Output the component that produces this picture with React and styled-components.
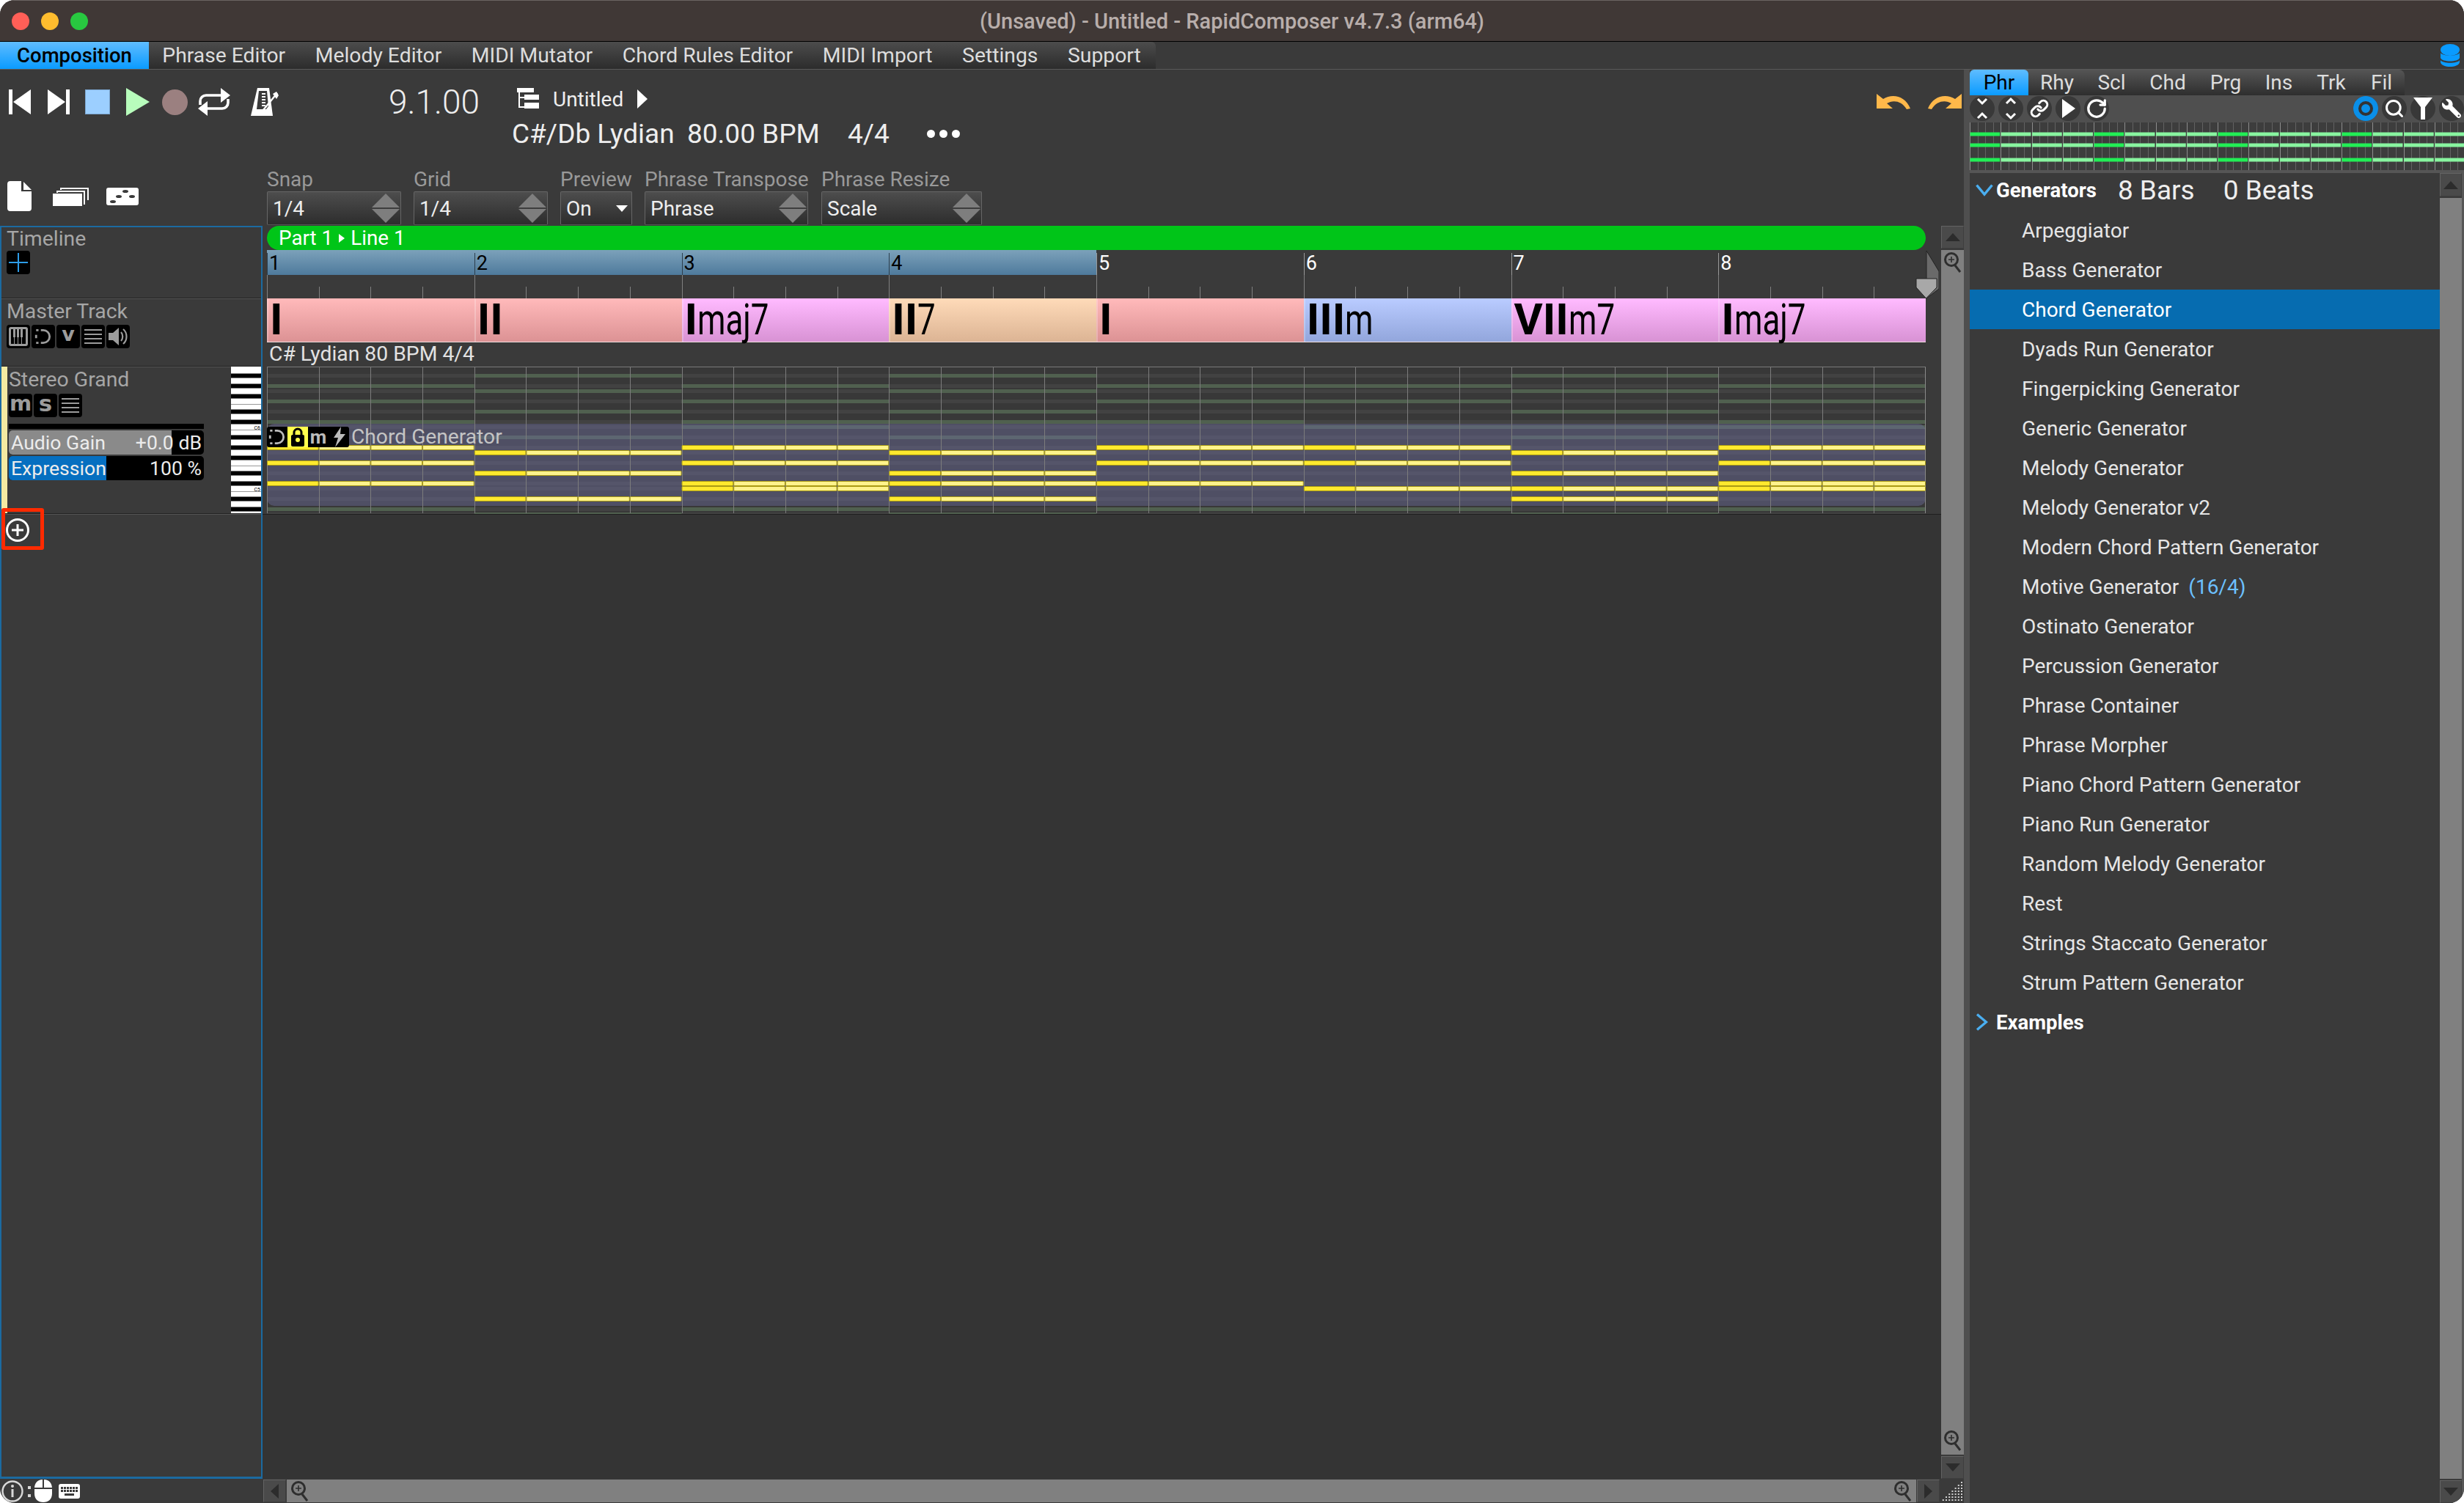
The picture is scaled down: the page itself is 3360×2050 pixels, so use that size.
import styled, { createGlobalStyle } from "styled-components";
import { Link, RotateCw, Search } from "lucide-react";
import { FaWrench } from "react-icons/fa";

const GlobalStyle = createGlobalStyle`
  html, body {
    margin: 0;
    padding: 0;
    background: #fff;
  }
`;

const Window = styled.div`
  width: 3360px;
  height: 2050px;
  border-radius: 20px;
  overflow: hidden;
  background: #3a3a3a;
  display: flex;
  flex-direction: column;
  font-family: Roboto, "Liberation Sans", sans-serif;
  color: #eee;
`;

const TitleBar = styled.div`
  height: 57px;
  flex: none;
  box-sizing: border-box;
  display: grid;
  grid-template-columns: 1fr auto 1fr;
  align-items: center;
  background: #403836;
  border-top: 1px solid #6a6462;
  border-bottom: 1px solid #000;
`;

const Lights = styled.div`
  display: flex;
  gap: 16px;
  padding-left: 16px;
`;

const Light = styled.span`
  width: 24px;
  height: 24px;
  border-radius: 50%;
  background: ${(p) => p.$color};
`;

const Title = styled.div`
  font-size: 29px;
  font-weight: 500;
  color: #b8aeab;
`;

const MenuRow = styled.div`
  height: 38px;
  flex: none;
  box-sizing: border-box;
  display: flex;
  border-bottom: 1px solid #5a5a5a;
  position: relative;
`;

const Menu = styled.div`
  display: flex;
  border-radius: 0 6px 0 0;
  background: linear-gradient(#4c4c4c, #2c2c2c);
`;

const MenuItem = styled.div`
  display: flex;
  align-items: center;
  justify-content: center;
  padding: 0 20.3px;
  font-size: 28.3px;
  color: #ddd;
`;

const ActiveMenuItem = styled(MenuItem)`
  width: 203px;
  box-sizing: border-box;
  padding: 0;
  margin-right: -2px;
  font-size: 27.5px;
  font-weight: 500;
  color: #000;
  background: linear-gradient(#5fbcff, #0a9bff);
`;

const DbIcon = styled.svg`
  width: 28px;
  height: 33px;
  margin: 3px 5px 0 auto;
`;

const Body = styled.div`
  flex: 1;
  display: flex;
  min-height: 0;
`;

const Main = styled.div`
  width: 2678px;
  flex: none;
  display: flex;
  flex-direction: column;
`;

const TopRow = styled.div`
  height: 137px;
  flex: none;
  display: flex;
  padding-top: 24px;
  box-sizing: border-box;
`;

const Transport = styled.div`
  width: 530px;
  height: 40px;
  flex: none;
  display: flex;
  align-items: center;
  padding-left: 12px;
  box-sizing: border-box;
`;

const TransportIcon = styled.svg`
  margin-left: ${(p) => p.$gap || 0}px;
  flex: none;
`;

const Position = styled.div`
  width: 168px;
  flex: none;
  height: 40px;
  line-height: 40px;
  font-size: 46px;
  font-weight: 300;
`;

const SongInfo = styled.div`
  display: flex;
  flex-direction: column;
  gap: 16px;
`;

const SongName = styled.div`
  display: flex;
  align-items: center;
  height: 32px;
  padding-left: 7px;
  font-size: 28px;
`;

const SongMeta = styled.div`
  display: flex;
  align-items: center;
  font-size: 37px;
  height: 30px;
`;

const MetaPart = styled.span`
  width: ${(p) => p.$w}px;
  flex: none;
`;

const Dots = styled.div`
  display: flex;
  gap: 6px;
`;

const Dot = styled.span`
  width: 11px;
  height: 11px;
  border-radius: 50%;
  background: #fff;
`;

const UndoRedo = styled.div`
  margin-left: auto;
  display: flex;
  gap: 24px;
  padding: 9px 3px 0 0;
`;

const ControlRow = styled.div`
  height: 76px;
  flex: none;
  display: flex;
`;

const DocIcons = styled.div`
  width: 364px;
  flex: none;
  display: flex;
  align-items: center;
  padding-left: 10px;
  box-sizing: border-box;
  height: 41px;
  margin-top: 15px;
`;

const Control = styled.div`
  width: ${(p) => p.$w}px;
  margin-right: ${(p) => p.$mr || 17}px;
  flex: none;
  display: flex;
  flex-direction: column;
`;

const ControlLabel = styled.div`
  height: 29px;
  line-height: 25px;
  font-size: 28px;
  color: #999;
  white-space: nowrap;
`;

const Combo = styled.div`
  height: 46px;
  box-sizing: border-box;
  display: flex;
  align-items: center;
  justify-content: space-between;
  border: 1px solid #666;
  border-bottom-color: #555;
  border-radius: 2px;
  padding: 0 1px 0 7px;
  background: linear-gradient(#4d4d4d, #2d2d2d);
  font-size: 28px;
  color: #eee;
`;

const Spinner = styled.div`
  display: flex;
  flex-direction: column;
  gap: 2px;
`;

const SpinUp = styled.span`
  width: 0;
  height: 0;
  border-left: 19px solid transparent;
  border-right: 19px solid transparent;
  border-bottom: 19px solid #7e7e7e;
`;

const SpinDown = styled(SpinUp)`
  border-bottom: 0;
  border-top: 19px solid #7e7e7e;
`;

const DropArrow = styled.span`
  width: 0;
  height: 0;
  margin-right: 4px;
  border-left: 8px solid transparent;
  border-right: 8px solid transparent;
  border-top: 9px solid #fff;
`;

const Workspace = styled.div`
  flex: 1;
  min-height: 0;
  display: flex;
`;

const TrackPanel = styled.div`
  width: 358px;
  flex: none;
  box-sizing: border-box;
  border: 2px solid #1b6aa0;
  border-bottom-width: 3px;
  display: flex;
  flex-direction: column;
`;

const TrackHead = styled.div`
  height: ${(p) => p.$h}px;
  flex: none;
  box-sizing: border-box;
  padding: ${(p) => p.$pad}px 0 0 7px;
  border-bottom: 1px solid #232323;
  box-shadow: 0 1px 0 #555;
`;

const TrackName = styled.div`
  font-size: 28.4px;
  line-height: 32px;
  color: #a6a6a6;
`;

const SmallButtons = styled.div`
  display: flex;
  gap: 2px;
  margin-top: ${(p) => p.$top || 0}px;
`;

const SmallButton = styled.div`
  width: 32px;
  height: 32px;
  border-radius: 4px;
  background: #000;
  color: #9c9c9c;
  display: flex;
  align-items: center;
  justify-content: center;
`;

const ButtonLetter = styled.span`
  font-family: "DejaVu Sans", sans-serif;
  font-weight: 700;
  font-size: ${(p) => p.$size}px;
  line-height: 32px;
  height: 32px;
  margin-top: -6px;
`;

const InstrumentRow = styled.div`
  height: 200px;
  flex: none;
  display: flex;
  border-bottom: 1px solid #232323;
  box-shadow: 0 1px 0 #555;
  box-sizing: content-box;
`;

const ColorStrip = styled.div`
  width: 8px;
  flex: none;
  background: #f4eaa2;
`;

const InstrumentInfo = styled.div`
  flex: 1;
  padding: 2px 0 0 2px;
`;

const Piano = styled.svg`
  width: 41px;
  height: 200px;
  flex: none;
  display: block;
`;

const MeterCap = styled.div`
  width: 266px;
  height: 7px;
  margin-top: 9px;
  background: #000;
`;

const Meter = styled.div`
  width: 266px;
  height: 33px;
  margin-top: ${(p) => p.$top}px;
  box-sizing: border-box;
  position: relative;
  border-radius: 5px;
  overflow: hidden;
  background: #000;
  display: flex;
  justify-content: space-between;
  align-items: center;
  padding: 0 3px;
  font-size: 26.6px;
  color: #ececec;
`;

const MeterFill = styled.div`
  position: absolute;
  left: 0;
  top: 0;
  bottom: 0;
  background: ${(p) => p.$color};
`;

const MeterText = styled.span`
  position: relative;
`;

const AddRow = styled.div`
  position: relative;
  flex: none;
  padding: 5px 0 0 5px;
`;

const AddHighlight = styled.div`
  position: absolute;
  left: 0;
  top: -8px;
  width: 58px;
  height: 57px;
  box-sizing: border-box;
  border: 5px solid #ff2a00;
  border-radius: 3px;
`;

const Arrange = styled.div`
  flex: 1;
  min-width: 0;
  position: relative;
  background: #343434;
`;

const ArrangeInner = styled.div`
  background: #3a3a3a;
  padding-left: 6px;
  border-bottom: 1px solid #1f1f1f;
`;

const ArrangeWidth = styled.div`
  width: 2262px;
`;

const PartBar = styled.div`
  height: 33px;
  border-radius: 17px;
  background: #00c518;
  color: #fff;
  display: flex;
  align-items: center;
  gap: 8px;
  padding-left: 16px;
  font-size: 27.8px;
`;

const PartArrow = styled.span`
  width: 0;
  height: 0;
  border-top: 6px solid transparent;
  border-bottom: 6px solid transparent;
  border-left: 8px solid #fff;
`;

const BarRow = styled.div`
  display: flex;
`;

const RulerBar = styled.div`
  flex: 1 1 0;
  height: 66px;
  display: flex;
  flex-direction: column;
  justify-content: space-between;
`;

const RulerHead = styled.div`
  height: 34px;
  box-sizing: border-box;
  padding: 3px 0 0 3px;
  font-size: 27px;
  line-height: 30px;
  color: ${(p) => (p.$loop ? "#000" : "#fff")};
  background: ${(p) => (p.$loop ? "linear-gradient(#7ca1ba, #4e7a9c)" : "none")};
  position: relative;

  &::before {
    content: "";
    position: absolute;
    left: 0;
    top: 4px;
    bottom: 0;
    width: 1px;
    background: ${(p) => (p.$loop ? "#2c3e4c" : "#999")};
  }
`;

const Ticks = styled.div`
  height: 32px;
  display: flex;
`;

const Tick = styled.div`
  flex: 1 1 0;
  border-left: 1px solid #808080;
  height: ${(p) => (p.$first ? 32 : 16)}px;
  align-self: flex-end;
`;

const ChordCell = styled.div`
  flex: 1 1 0;
  height: 60px;
  box-sizing: border-box;
  display: flex;
  align-items: center;
  padding: 0 0 2px 4px;
  background: linear-gradient(${(p) => p.$from}, ${(p) => p.$to});
  border-top: 1px solid ${(p) => p.$from};
  border-bottom: 1px solid #f2dfe0;
  box-shadow: inset 2px 0 0 rgba(255, 255, 255, 0.25);
  color: #000;
  font-size: 60px;
  line-height: 56px;
  white-space: nowrap;
`;

const Numeral = styled.span`
  font-weight: 700;
`;

const Suffix = styled.span`
  display: inline-block;
  transform: scaleX(0.73);
  transform-origin: left center;
`;

const KeyLine = styled.div`
  height: 33px;
  padding-left: 3px;
  font-size: 28.3px;
  line-height: 32px;
  color: #e2e2e2;
`;

const RollWrap = styled.div`
  position: relative;
  height: 201px;
`;

const PhraseHead = styled.div`
  position: absolute;
  left: 0;
  top: 79px;
  display: flex;
  align-items: center;
  color: #c4c4c4;
  font-size: 28.2px;
`;

const PhraseTools = styled.div`
  display: flex;
  background: #000;
  border-radius: 3px;
  height: 28px;
  margin-right: 3px;
`;

const PhraseTool = styled.div`
  width: 28px;
  height: 28px;
  display: flex;
  align-items: center;
  justify-content: center;
  background: ${(p) => (p.$on ? "#ffff4d" : "none")};
  color: #bbb;
  font-weight: 700;
  font-size: 26px;
`;

const EndMarker = styled.svg`
  position: absolute;
  left: 2254px;
  top: 34px;
`;

const VScroll = styled.div`
  width: 31px;
  flex: none;
  display: flex;
  flex-direction: column;
  gap: 2px;
`;

const ScrollButton = styled.div`
  flex: none;
  width: ${(p) => p.$w || 31}px;
  height: ${(p) => p.$h || 31}px;
  box-sizing: border-box;
  background: #4a4a4a;
  border: 1px solid #636363;
  border-right-color: #3e3e3e;
  border-bottom-color: #3e3e3e;
  display: flex;
  align-items: center;
  justify-content: center;
`;

const Triangle = styled.span`
  width: 0;
  height: 0;
  ${(p) =>
    p.$dir === "up" &&
    "border-left: 10px solid transparent; border-right: 10px solid transparent; border-bottom: 11px solid #2c2c2c;"}
  ${(p) =>
    p.$dir === "down" &&
    "border-left: 10px solid transparent; border-right: 10px solid transparent; border-top: 11px solid #2c2c2c;"}
  ${(p) =>
    p.$dir === "left" &&
    "border-top: 10px solid transparent; border-bottom: 10px solid transparent; border-right: 11px solid #2c2c2c;"}
  ${(p) =>
    p.$dir === "right" &&
    "border-top: 10px solid transparent; border-bottom: 10px solid transparent; border-left: 11px solid #2c2c2c;"}
`;

const VTrack = styled.div`
  flex: 1;
  background: #808080;
  display: flex;
  flex-direction: column;
  justify-content: space-between;
  align-items: center;
  padding: 2px 0 4px;
`;

const BottomRow = styled.div`
  height: 33px;
  flex: none;
  display: flex;
`;

const InfoBar = styled.div`
  width: 358px;
  flex: none;
  display: flex;
  align-items: center;
  padding-left: 2px;
  box-sizing: border-box;
`;

const HScroll = styled.div`
  flex: 1;
  display: flex;
  gap: 1px;
  padding: 1px 0 1px 1px;
`;

const HTrack = styled.div`
  flex: 1;
  background: #808080;
  display: flex;
  justify-content: space-between;
  align-items: center;
  padding: 0 5px;
`;

const Grip = styled.svg`
  width: 33px;
  height: 33px;
  flex: none;
`;

const Divider = styled.div`
  width: 8px;
  flex: none;
  background: #4f4f4f;
`;

const Side = styled.div`
  flex: 1;
  min-width: 0;
  display: flex;
  flex-direction: column;
`;

const TabStrip = styled.div`
  display: flex;
  height: 35px;
  flex: none;
`;

const Tabs = styled.div`
  display: flex;
  border-radius: 8px 8px 0 0;
  background: linear-gradient(#555, #2e2e2e);
`;

const Tab = styled.div`
  width: ${(p) => p.$w}px;
  box-sizing: border-box;
  display: flex;
  align-items: center;
  justify-content: center;
  border-radius: ${(p) => (p.$active ? "6px 6px 0 0" : 0)};
  background: ${(p) => (p.$active ? "linear-gradient(#5fbcff, #0a9bff)" : "none")};
  color: ${(p) => (p.$active ? "#000" : "#ddd")};
  font-size: 28px;
`;

const Toolbar = styled.div`
  height: 37px;
  flex: none;
  display: flex;
  justify-content: space-between;
  background: #4f4f4f;
  padding: 1px 0 2px;
  box-sizing: border-box;
`;

const ToolGroup = styled.div`
  display: flex;
  gap: 5px;
`;

const RoundTool = styled.div`
  width: 34px;
  height: 34px;
  border-radius: 50%;
  background: #383838;
  color: #fff;
  display: flex;
  align-items: center;
  justify-content: center;
  flex: none;
`;

const Preview = styled.svg`
  display: block;
  flex: none;
  width: 674px;
  height: 65px;
`;

const ListArea = styled.div`
  flex: 1;
  min-height: 0;
  display: flex;
  border-top: 4px solid #565656;
  border-right: 3px solid #565656;
`;

const List = styled.div`
  flex: 1;
  min-width: 0;
`;

const GroupRow = styled.div`
  height: ${(p) => p.$h}px;
  box-sizing: border-box;
  display: flex;
  align-items: center;
  padding: 0 0 ${(p) => p.$under || 0}px 8px;
`;

const GroupName = styled.span`
  font-size: 27.5px;
  font-weight: 700;
  color: #fff;
  margin-left: 4px;
`;

const Duration = styled.span`
  font-size: 37px;
  margin-left: ${(p) => p.$gap}px;
`;

const ListItem = styled.div`
  height: 54px;
  display: flex;
  align-items: center;
  padding-left: 71px;
  font-size: 28px;
  color: ${(p) => (p.$active ? "#fff" : "#e6e6e6")};
  background: ${(p) => (p.$active ? "#066cb0" : "none")};
`;

const Hint = styled.span`
  color: #6cc0ff;
  margin-left: 13px;
`;

const SideScroll = styled.div`
  width: 30px;
  flex: none;
  display: flex;
  flex-direction: column;
  gap: 2px;
`;

const SideTrack = styled.div`
  flex: 1;
  background: #808080;
`;

const BARS = [
  { num: "I", suf: "", from: "#ffb9ba", to: "#dc9294", pcs: [0, 4, 7], notes: [15, 18, 22] },
  { num: "II", suf: "", from: "#ffb9ba", to: "#dc9294", pcs: [2, 6, 9], notes: [16, 20, 25] },
  { num: "I", suf: "maj7", from: "#ffbaff", to: "#d892d4", pcs: [0, 4, 7, 11], notes: [15, 18, 22, 23] },
  { num: "II", suf: "7", from: "#fedab8", to: "#dcb494", pcs: [2, 6, 9, 0], notes: [16, 20, 22, 25] },
  { num: "I", suf: "", from: "#ffb9ba", to: "#dc9294", pcs: [0, 4, 7], notes: [15, 18, 22] },
  { num: "III", suf: "m", from: "#b9cbff", to: "#92a6dc", pcs: [4, 7, 11], notes: [15, 18, 23] },
  { num: "VII", suf: "m7", from: "#ffbaff", to: "#d892d4", pcs: [11, 2, 6, 9], notes: [16, 20, 23, 25] },
  { num: "I", suf: "maj7", from: "#ffbaff", to: "#d892d4", pcs: [0, 4, 7, 11], notes: [15, 18, 22, 23] },
];

const BAR_W = 2262 / 8;
const BEAT_W = BAR_W / 4;
const ROWS = Array.from({ length: 29 }, (_, r) => r);
const pitchOf = (r) => ((22 - r) % 12 + 12) % 12;
const LYDIAN = [0, 2, 4, 6, 7, 9, 11];
const BLACK = [0, 2, 5, 7, 9];

const MENU = ["Phrase Editor", "Melody Editor", "MIDI Mutator", "Chord Rules Editor", "MIDI Import", "Settings", "Support"];
const TABS = [
  ["Phr", 80], ["Rhy", 78], ["Scl", 71], ["Chd", 82], ["Prg", 76], ["Ins", 69], ["Trk", 74], ["Fil", 63],
];
const GENERATORS = [
  "Arpeggiator", "Bass Generator", "Chord Generator", "Dyads Run Generator", "Fingerpicking Generator",
  "Generic Generator", "Melody Generator", "Melody Generator v2", "Modern Chord Pattern Generator",
  "Motive Generator", "Ostinato Generator", "Percussion Generator", "Phrase Container", "Phrase Morpher",
  "Piano Chord Pattern Generator", "Piano Run Generator", "Random Melody Generator", "Rest",
  "Strings Staccato Generator", "Strum Pattern Generator",
];

function LoopGlyph({ size = 26 }) {
  return (
    <svg width={size} height={size} viewBox="0 0 24 24" fill="none" stroke="currentColor" strokeWidth="2.6">
      <path d="M9 4h3a8 8 0 0 1 0 16H9" />
      <path d="M3 4h3M3 20h3M3 10v4" />
    </svg>
  );
}

function LinesGlyph() {
  return (
    <svg width="24" height="22" viewBox="0 0 24 22" fill="#9c9c9c">
      <rect y="1" width="24" height="2" />
      <rect y="7" width="24" height="2" />
      <rect y="13" width="24" height="2" />
      <rect y="19" width="24" height="2" />
    </svg>
  );
}

function Magnifier() {
  return (
    <svg width="26" height="30" viewBox="0 0 26 30" fill="none" stroke="#2e2e2e" strokeWidth="3">
      <circle cx="11" cy="11" r="8.5" />
      <path d="M16 19l7 9" />
      <path d="M7 11h8M11 7v8" strokeWidth="1.6" />
    </svg>
  );
}

function Chevrons({ inward }) {
  const top = inward ? "M6 3l6 6 6-6" : "M6 9l6-6 6 6";
  const bottom = inward ? "M6 29l6-6 6 6" : "M6 23l6 6 6-6";
  return (
    <svg width="24" height="32" viewBox="0 0 24 32" fill="none" stroke="#fff" strokeWidth="3">
      <path d={top} />
      <path d={bottom} />
    </svg>
  );
}

function PianoRoll() {
  return (
    <svg width="2262" height="201" viewBox="0 0 2262 201" style={{ display: "block" }}>
      <rect width="2262" height="200" fill="#383838" />
      {ROWS.filter((r) => LYDIAN.includes(pitchOf(r))).map((r) => (
        <rect key={r} x="0" y={3 + 7 * r} width="2262" height="5" fill="#424242" />
      ))}
      {BARS.map((bar, i) =>
        ROWS.filter((r) => bar.pcs.includes(pitchOf(r))).map((r) => (
          <rect key={`${i}-${r}`} x={i * BAR_W} y={3 + 7 * r} width={BAR_W} height="5" fill="#50604f" />
        ))
      )}
      <rect x="0" y="78" width="2262" height="112" rx="10" fill="#7171a3" fillOpacity="0.42" />
      {BARS.flatMap((_, i) =>
        [0, 1, 2, 3].map((b) => (
          <rect
            key={`${i}-${b}`}
            x={Math.round(i * BAR_W + b * BEAT_W)}
            y="0"
            width="1"
            height="200"
            fill="#7c7c7c"
          />
        ))
      )}
      <rect x="2261" y="0" width="1" height="200" fill="#8a8a8a" />
      <rect width="2262" height="1" fill="#7a7a7a" />
      {BARS.flatMap((bar, i) =>
        bar.notes.flatMap((r) =>
          [0, 1, 2, 3].map((b) => (
            <rect
              key={`${i}-${r}-${b}`}
              x={i * BAR_W + b * BEAT_W + 0.5}
              y={2.5 + 7 * r}
              width={BEAT_W - 1}
              height="6"
              rx="1"
              fill={b === 0 ? "#ffe92e" : "#fff38c"}
              stroke="#a89a14"
              strokeWidth="1"
            />
          ))
        )
      )}
    </svg>
  );
}

function PreviewNotes() {
  const beats = Array.from({ length: 16 }, (_, i) => i);
  const subs = Array.from({ length: 65 }, (_, i) => i);
  const step = 42.25;
  return (
    <Preview viewBox="0 0 674 65">
      <rect width="674" height="65" fill="#3d3d3d" />
      {subs.map((i) => (
        <rect key={i} x={Math.round((i * step) / 4)} width="1" height="65" fill={i % 4 === 0 ? "#8c8c8c" : "#626262"} />
      ))}
      {[16, 31, 51].flatMap((y) =>
        beats.map((b) => (
          <rect
            key={`${y}-${b}`}
            x={b * step + 0.5}
            y={y - 2.5}
            width={step - 1.5}
            height="5"
            fill={b % 4 === 0 ? "#22ee55" : "#88f5a0"}
          />
        ))
      )}
    </Preview>
  );
}

function PianoKeys() {
  return (
    <Piano viewBox="0 0 41 200">
      <rect width="41" height="200" fill="#fff" />
      {ROWS.filter((r) => BLACK.includes(pitchOf(r))).map((r) => (
        <rect key={r} y={2.5 + 7 * r} width="41" height="6" fill="#000" />
      ))}
      <rect y="51" width="41" height="1" fill="#999" />
      <rect y="86" width="41" height="1" fill="#999" />
      <rect y="135" width="41" height="1" fill="#999" />
      <rect y="170" width="41" height="1" fill="#999" />
      <text x="40" y="86" textAnchor="end" fontSize="7" fontFamily="Roboto, sans-serif" fill="#000">C6</text>
      <text x="40" y="170" textAnchor="end" fontSize="7" fontFamily="Roboto, sans-serif" fill="#000">C5</text>
    </Piano>
  );
}

function App() {
  return (
    <>
      <GlobalStyle />
      <Window>
        <TitleBar>
          <Lights>
            <Light $color="#ff5f57" />
            <Light $color="#febc2e" />
            <Light $color="#28c840" />
          </Lights>
          <Title>(Unsaved) - Untitled - RapidComposer v4.7.3 (arm64)</Title>
          <span />
        </TitleBar>

        <MenuRow>
          <Menu>
            <ActiveMenuItem>Composition</ActiveMenuItem>
            {MENU.map((item) => (
              <MenuItem key={item}>{item}</MenuItem>
            ))}
          </Menu>
          <DbIcon viewBox="0 0 28 33" fill="#0a9bff">
            <ellipse cx="14" cy="8" rx="13" ry="8" />
            <path d="M1 12c3 5 23 5 26 0v7c-2 6-24 6-26 0z" />
            <path d="M1 22c3 5 23 5 26 0v3c-2 8-24 8-26 0z" />
          </DbIcon>
        </MenuRow>

        <Body>
          <Main>
            <TopRow>
              <Transport>
                <TransportIcon width="30" height="34" viewBox="0 0 30 34" fill="#fff">
                  <rect width="5" height="34" />
                  <path d="M30 0v34L6 17z" />
                </TransportIcon>
                <TransportIcon $gap={23} width="30" height="34" viewBox="0 0 30 34" fill="#fff">
                  <rect x="25" width="5" height="34" />
                  <path d="M0 0v34l24-17z" />
                </TransportIcon>
                <TransportIcon $gap={21} width="34" height="34" viewBox="0 0 34 34">
                  <rect x="0.5" y="0.5" width="33" height="33" fill="#9ccfff" stroke="#7ba5cf" />
                </TransportIcon>
                <TransportIcon $gap={22} width="32" height="38" viewBox="0 0 32 38" fill="#b8fdbc">
                  <path d="M0 0l32 19L0 38z" />
                </TransportIcon>
                <TransportIcon $gap={17} width="35" height="35" viewBox="0 0 35 35" fill="#9b8080">
                  <circle cx="17.5" cy="17.5" r="17.5" />
                </TransportIcon>
                <TransportIcon $gap={14} width="44" height="38" viewBox="0 0 44 38" fill="none" stroke="#fff" strokeWidth="3.6">
                  <path d="M3 23v-5a8 8 0 0 1 8-8h22" />
                  <path d="M41 15v5a8 8 0 0 1-8 8H11" />
                  <path d="M31 0l13 10-13 10z" fill="#fff" stroke="none" />
                  <path d="M13 18L0 28l13 10z" fill="#fff" stroke="none" />
                </TransportIcon>
                <TransportIcon $gap={28} width="40" height="38" viewBox="0 0 40 38">
                  <path d="M9 0h16l5 38H0z" fill="#fff" />
                  <path d="M11 4h11l2 21-3 4H8z" fill="#3a3a3a" />
                  <path d="M15 8h5M15 12h5M15 16h5M15 20h5M15 24h5" stroke="#fff" strokeWidth="2" />
                  <path d="M36 7L17 30" stroke="#fff" strokeWidth="2.4" />
                  <path d="M30 8l5 7 3-5-3-5z" fill="#fff" />
                </TransportIcon>
              </Transport>
              <Position>9.1.00</Position>
              <SongInfo>
                <SongName>
                  <svg width="30" height="30" viewBox="0 0 30 30" fill="#fff" style={{ marginRight: 19 }}>
                    <rect x="0" y="0" width="23" height="6" />
                    <rect x="10" y="9" width="20" height="7" />
                    <rect x="10" y="20" width="20" height="8" />
                    <path d="M3 6v20h8M3 13h8" fill="none" stroke="#fff" strokeWidth="2" />
                  </svg>
                  Untitled
                  <svg width="14" height="26" viewBox="0 0 14 26" fill="#fff" style={{ marginLeft: 19 }}>
                    <path d="M0 0l14 13L0 26z" />
                  </svg>
                </SongName>
                <SongMeta>
                  <MetaPart $w={239}>C#/Db Lydian</MetaPart>
                  <MetaPart $w={219}>80.00 BPM</MetaPart>
                  <MetaPart $w={108}>4/4</MetaPart>
                  <Dots>
                    <Dot />
                    <Dot />
                    <Dot />
                  </Dots>
                </SongMeta>
              </SongInfo>
              <UndoRedo>
                <svg width="46" height="22" viewBox="0 0 46 22" fill="#ffb84a">
                  <path d="M0 0v20h22L14 13c8-5 20-4 27 8l5-1C39 3 22-1 9 7z" />
                </svg>
                <svg width="46" height="22" viewBox="0 0 46 22" fill="#ffb84a">
                  <path d="M46 0v20H24L32 13C24 8 12 9 5 21L0 20C7 3 24-1 37 7z" />
                </svg>
              </UndoRedo>
            </TopRow>

            <ControlRow>
              <DocIcons>
                <svg width="33" height="41" viewBox="0 0 33 41" fill="#fff">
                  <path d="M4 0h15v14h14v23a4 4 0 0 1-4 4H4a4 4 0 0 1-4-4V4a4 4 0 0 1 4-4z" />
                  <path d="M22 1l11 11H22z" />
                </svg>
                <svg width="49" height="26" viewBox="0 0 49 26" fill="#fff" style={{ marginLeft: 29 }}>
                  <rect x="0" y="9" width="40" height="17" />
                  <path d="M5 8V5h39v19h-2V7H7v1zM10 4V1h39v17h-2V3H12v1z" />
                </svg>
                <svg width="44" height="24" viewBox="0 0 44 24" style={{ marginLeft: 24 }}>
                  <rect width="44" height="24" rx="3" fill="#fff" />
                  <g fill="#3a3a3a">
                    <ellipse cx="26" cy="5" rx="4" ry="2" />
                    <ellipse cx="17" cy="12" rx="4" ry="2" />
                    <ellipse cx="35" cy="12" rx="4" ry="2" />
                    <ellipse cx="9" cy="19" rx="4" ry="2" />
                  </g>
                </svg>
              </DocIcons>
              <Control $w={183}>
                <ControlLabel>Snap</ControlLabel>
                <Combo>1/4<Spinner><SpinUp /><SpinDown /></Spinner></Combo>
              </Control>
              <Control $w={183}>
                <ControlLabel>Grid</ControlLabel>
                <Combo>1/4<Spinner><SpinUp /><SpinDown /></Spinner></Combo>
              </Control>
              <Control $w={98}>
                <ControlLabel>Preview</ControlLabel>
                <Combo>On<DropArrow /></Combo>
              </Control>
              <Control $w={223} $mr={18}>
                <ControlLabel>Phrase Transpose</ControlLabel>
                <Combo>Phrase<Spinner><SpinUp /><SpinDown /></Spinner></Combo>
              </Control>
              <Control $w={219}>
                <ControlLabel>Phrase Resize</ControlLabel>
                <Combo>Scale<Spinner><SpinUp /><SpinDown /></Spinner></Combo>
              </Control>
            </ControlRow>

            <Workspace>
              <TrackPanel>
                <TrackHead $h={97} $pad={0}>
                  <TrackName>Timeline</TrackName>
                  <SmallButtons>
                    <SmallButton>
                      <svg width="26" height="28" viewBox="0 0 26 28" stroke="#2d9ce8" strokeWidth="2">
                        <path d="M0 14h26M13 1v26" />
                      </svg>
                    </SmallButton>
                  </SmallButtons>
                </TrackHead>
                <TrackHead $h={93} $pad={2}>
                  <TrackName>Master Track</TrackName>
                  <SmallButtons $top={2}>
                    <SmallButton>
                      <svg width="26" height="26" viewBox="0 0 26 26" fill="#9c9c9c">
                        <path fillRule="evenodd" d="M0 3a3 3 0 0 1 3-3h20a3 3 0 0 1 3 3v20a3 3 0 0 1-3 3H3a3 3 0 0 1-3-3zM3 3v20h4V14H6V3zM9 3v11H8v9h4V14h-1V3zM14 3v11h-1v9h4V14h-1V3zM19 3v11h-1v9h5V3z" />
                      </svg>
                    </SmallButton>
                    <SmallButton><LoopGlyph /></SmallButton>
                    <SmallButton><ButtonLetter $size={27}>v</ButtonLetter></SmallButton>
                    <SmallButton><LinesGlyph /></SmallButton>
                    <SmallButton>
                      <svg width="26" height="26" viewBox="0 0 26 26" fill="#9c9c9c">
                        <path d="M0 8h6l8-7v24l-8-7H0z" />
                        <path d="M17 7c3 3 3 9 0 12M20 3c6 5 6 15 0 20" fill="none" stroke="#9c9c9c" strokeWidth="2.2" />
                      </svg>
                    </SmallButton>
                  </SmallButtons>
                </TrackHead>
                <InstrumentRow>
                  <ColorStrip />
                  <InstrumentInfo>
                    <TrackName>Stereo Grand</TrackName>
                    <SmallButtons $top={3}>
                      <SmallButton><ButtonLetter $size={29}>m</ButtonLetter></SmallButton>
                      <SmallButton><ButtonLetter $size={31}>s</ButtonLetter></SmallButton>
                      <SmallButton><LinesGlyph /></SmallButton>
                    </SmallButtons>
                    <MeterCap />
                    <Meter $top={2}>
                      <MeterFill $color="#8a8a8a" style={{ width: "83.5%" }} />
                      <MeterText>Audio Gain</MeterText>
                      <MeterText>+0.0 dB</MeterText>
                    </Meter>
                    <Meter $top={2}>
                      <MeterFill $color="#066fc0" style={{ width: "50%" }} />
                      <MeterText>Expression</MeterText>
                      <MeterText>100 %</MeterText>
                    </Meter>
                  </InstrumentInfo>
                  <PianoKeys />
                </InstrumentRow>
                <AddRow>
                  <AddHighlight />
                  <svg width="34" height="34" viewBox="0 0 34 34" fill="none" stroke="#fff" style={{ display: "block" }}>
                    <circle cx="17" cy="17" r="14.5" strokeWidth="3" />
                    <path d="M17 9v16M9 17h16" strokeWidth="3" />
                  </svg>
                </AddRow>
              </TrackPanel>

              <Arrange>
                <ArrangeInner>
                  <ArrangeWidth>
                    <PartBar>
                      Part 1
                      <PartArrow />
                      Line 1
                    </PartBar>
                    <BarRow>
                      {BARS.map((_, i) => (
                        <RulerBar key={i}>
                          <RulerHead $loop={i < 4}>{i + 1}</RulerHead>
                          <Ticks>
                            <Tick $first />
                            <Tick />
                            <Tick />
                            <Tick />
                          </Ticks>
                        </RulerBar>
                      ))}
                    </BarRow>
                    <BarRow>
                      {BARS.map((bar, i) => (
                        <ChordCell key={i} $from={bar.from} $to={bar.to}>
                          <Numeral>{bar.num}</Numeral>
                          {bar.suf && <Suffix>{bar.suf}</Suffix>}
                        </ChordCell>
                      ))}
                    </BarRow>
                    <KeyLine>C# Lydian 80 BPM 4/4</KeyLine>
                    <RollWrap>
                      <PianoRoll />
                      <PhraseHead>
                        <PhraseTools>
                          <PhraseTool><LoopGlyph /></PhraseTool>
                          <PhraseTool $on>
                            <svg width="20" height="26" viewBox="0 0 20 26">
                              <path d="M5 11V7a5 5 0 0 1 10 0v4" fill="none" stroke="#000" strokeWidth="3" />
                              <rect x="1" y="10" width="18" height="16" rx="2" fill="#000" />
                              <circle cx="10" cy="17" r="3" fill="#ffff4d" />
                            </svg>
                          </PhraseTool>
                          <PhraseTool>m</PhraseTool>
                          <PhraseTool>
                            <svg width="20" height="28" viewBox="0 0 20 28" fill="#bbb">
                              <path d="M13 0L3 15h6L5 28l14-18h-7z" />
                            </svg>
                          </PhraseTool>
                        </PhraseTools>
                        Chord Generator
                      </PhraseHead>
                    </RollWrap>
                  </ArrangeWidth>
                </ArrangeInner>
                <EndMarker width="32" height="66" viewBox="0 0 32 66">
                  <path d="M15 0l17 28v24L15 65z" fill="#6a6a6a" stroke="#222" />
                  <path d="M1 38h28v12L14.5 65 1 50z" fill="#a8a8a8" stroke="#222" />
                </EndMarker>
              </Arrange>

              <VScroll>
                <ScrollButton><Triangle $dir="up" /></ScrollButton>
                <VTrack>
                  <Magnifier />
                  <Magnifier />
                </VTrack>
                <ScrollButton><Triangle $dir="down" /></ScrollButton>
              </VScroll>
            </Workspace>

            <BottomRow>
              <InfoBar>
                <svg width="30" height="30" viewBox="0 0 30 30">
                  <circle cx="15" cy="15" r="13.5" fill="none" stroke="#d8d8d8" strokeWidth="2.4" />
                  <circle cx="15" cy="8" r="2" fill="#d8d8d8" />
                  <rect x="13.5" y="12" width="3" height="11" fill="#d8d8d8" />
                </svg>
                <svg width="10" height="22" viewBox="0 0 10 22" fill="#d8d8d8" style={{ marginLeft: 4 }}>
                  <rect x="2" y="4" width="4" height="4" />
                  <rect x="2" y="15" width="4" height="4" />
                </svg>
                <svg width="24" height="31" viewBox="0 0 24 31" fill="#fff" style={{ marginLeft: 1 }}>
                  <path d="M0 12C0 5 4 0 11 0v11H0zM13 0c7 0 11 5 11 12v-1H13zM0 13h24v6c0 8-5 12-12 12S0 27 0 19z" />
                </svg>
                <svg width="29" height="20" viewBox="0 0 29 20" style={{ marginLeft: 9 }}>
                  <rect width="29" height="20" rx="3" fill="#fff" />
                  <g fill="#3a3a3a">
                    {[3, 7, 11, 15, 19, 23].map((x) => (
                      <rect key={x} x={x} y="4" width="3" height="3" />
                    ))}
                    {[3, 7, 11, 15, 19, 23].map((x) => (
                      <rect key={x} x={x} y="8" width="3" height="3" />
                    ))}
                    <rect x="8" y="13" width="13" height="3" />
                  </g>
                </svg>
              </InfoBar>
              <HScroll>
                <ScrollButton><Triangle $dir="left" /></ScrollButton>
                <HTrack>
                  <Magnifier />
                  <Magnifier />
                </HTrack>
                <ScrollButton><Triangle $dir="right" /></ScrollButton>
              </HScroll>
              <Grip viewBox="0 0 33 33" fill="#cfcfcf">
                {[0, 1, 2, 3, 4, 5, 6].flatMap((row) =>
                  Array.from({ length: row + 1 }, (_, k) => (
                    <rect key={`${row}-${k}`} x={29 - k * 4.2} y={4 + row * 4} width="2" height="2" />
                  ))
                )}
              </Grip>
            </BottomRow>
          </Main>

          <Divider />

          <Side>
            <TabStrip>
              <Tabs>
                {TABS.map(([label, width], i) => (
                  <Tab key={label} $w={width} $active={i === 0}>{label}</Tab>
                ))}
              </Tabs>
            </TabStrip>
            <Toolbar>
              <ToolGroup>
                <RoundTool><Chevrons inward /></RoundTool>
                <RoundTool><Chevrons /></RoundTool>
                <RoundTool><Link size={26} strokeWidth={2.8} /></RoundTool>
                <RoundTool>
                  <svg width="20" height="26" viewBox="0 0 20 26" fill="#fff"><path d="M2 0l18 13L2 26z" /></svg>
                </RoundTool>
                <RoundTool><RotateCw size={30} strokeWidth={2.6} /></RoundTool>
              </ToolGroup>
              <ToolGroup>
                <RoundTool>
                  <svg width="34" height="34" viewBox="0 0 34 34">
                    <circle cx="17" cy="17" r="17" fill="#0a8fe8" />
                    <circle cx="17" cy="17" r="8" fill="none" stroke="#333" strokeWidth="4" />
                  </svg>
                </RoundTool>
                <RoundTool><Search size={28} strokeWidth={2.6} /></RoundTool>
                <RoundTool>
                  <svg width="26" height="30" viewBox="0 0 26 30" fill="#fff"><path d="M0 0h26L16 13v17h-6V13z" /></svg>
                </RoundTool>
                <RoundTool><FaWrench size={26} style={{ transform: "scaleX(-1)" }} /></RoundTool>
              </ToolGroup>
            </Toolbar>
            <PreviewNotes />
            <ListArea>
              <List>
                <GroupRow $h={51} $under={5}>
                  <svg width="24" height="17" viewBox="0 0 24 17" fill="none" stroke="#4aaef0" strokeWidth="3.4">
                    <path d="M1.5 1.5L12 14 22.5 1.5" />
                  </svg>
                  <GroupName>Generators</GroupName>
                  <Duration $gap={29}>8 Bars</Duration>
                  <Duration $gap={39}>0 Beats</Duration>
                </GroupRow>
                {GENERATORS.map((name) => (
                  <ListItem key={name} $active={name === "Chord Generator"}>
                    {name}
                    {name === "Motive Generator" && <Hint>(16/4)</Hint>}
                  </ListItem>
                ))}
                <GroupRow $h={54}>
                  <svg width="17" height="24" viewBox="0 0 17 24" fill="none" stroke="#4aaef0" strokeWidth="3.4" style={{ marginRight: 7 }}>
                    <path d="M2 1.5L14.5 12 2 22.5" />
                  </svg>
                  <GroupName>Examples</GroupName>
                </GroupRow>
              </List>
              <SideScroll>
                <ScrollButton $w={30} $h={32}><Triangle $dir="up" /></ScrollButton>
                <SideTrack />
                <ScrollButton $w={30} $h={31}><Triangle $dir="down" /></ScrollButton>
              </SideScroll>
            </ListArea>
          </Side>
        </Body>
      </Window>
    </>
  );
}

export default App;
